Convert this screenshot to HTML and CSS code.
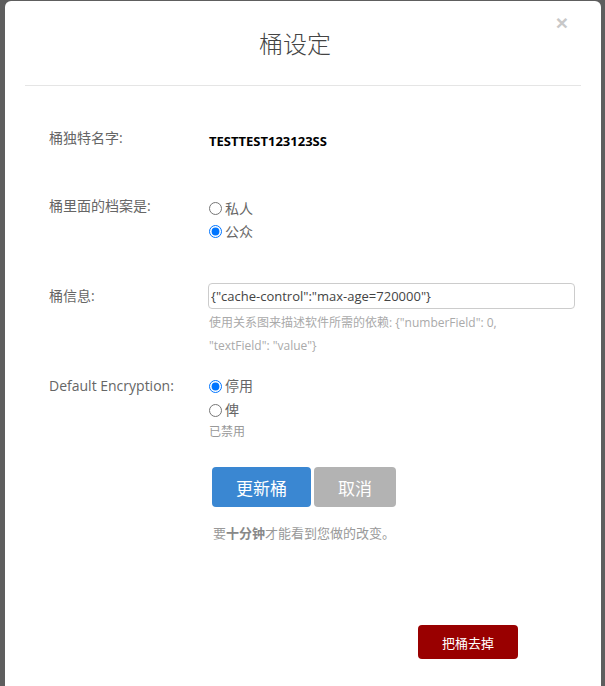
FILE: index.html
```html
<!DOCTYPE html>
<html lang="zh">
<head>
<meta charset="utf-8">
<title>桶设定</title>
<link rel="stylesheet" href="styles.css">
</head>
<body>
<div class="modal">
  <div class="header">
    <h1 class="title">桶设定</h1>
    <span class="close">×</span>
  </div>
  <div class="content">
    <div class="row row-name">
      <div class="label">桶独特名字:</div>
      <div class="value-name">TESTTEST123123SS</div>
    </div>
    <div class="row row-access">
      <div class="label">桶里面的档案是:</div>
      <div class="options">
        <label class="opt"><input type="radio" name="acc"><span>私人</span></label>
        <label class="opt"><input type="radio" name="acc" checked><span>公众</span></label>
      </div>
    </div>
    <div class="row row-info">
      <div class="label label-info">桶信息:</div>
      <div>
        <input class="text-input" type="text" value='{"cache-control":"max-age=720000"}'>
        <div class="help">使用关系图来描述软件所需的依赖: {"numberField": 0, "textField": "value"}</div>
      </div>
    </div>
    <div class="row row-enc">
      <div class="label">Default Encryption:</div>
      <div class="options options-enc">
        <label class="opt opt-enc"><input type="radio" name="enc" checked><span>停用</span></label>
        <label class="opt opt-enc"><input type="radio" name="enc"><span>俾</span></label>
        <div class="disabled-note">已禁用</div>
      </div>
    </div>
    <div class="actions">
      <button class="btn btn-primary">更新桶</button>
      <button class="btn btn-cancel">取消</button>
    </div>
    <p class="note">要<b>十分钟</b>才能看到您做的改变。</p>
    <div class="footer">
      <button class="btn-danger">把桶去掉</button>
    </div>
  </div>
</div>
</body>
</html>
```
FILE: styles.css
```css
html, body {
  margin: 0;
  padding: 0;
}
body {
  background: #5e5e5e;
  height: 686px;
  overflow: hidden;
  font-family: "Open Sans", "Noto Sans CJK SC", sans-serif;
  color: #666;
}
.modal {
  position: relative;
  margin: 1px 4px 0 5px;
  height: 720px;
  background: #fff;
  border-radius: 6px 6px 0 0;
}
.header {
  margin: 0 20px;
  height: 84px;
  border-bottom: 1px solid #e5e5e5;
  display: flex;
  align-items: center;
  justify-content: center;
}
.title {
  margin: 0 16px 0 0;
  font-family: "Noto Sans CJK SC", sans-serif;
  font-size: 24px;
  font-weight: 300;
  color: #444;
  line-height: 30px;
}
.close {
  position: absolute;
  top: 10px;
  right: 33px;
  font-family: "Liberation Sans", sans-serif;
  font-size: 21px;
  font-weight: bold;
  line-height: 24px;
  color: #c8c8c8;
}
.content {
  padding-left: 44px;
}
.row {
  display: grid;
  grid-template-columns: 160px 1fr;
  font-size: 14px;
  line-height: 18px;
}
.row-name { margin-top: 43px; }
.row-access { margin-top: 47px; }
.row-info { margin-top: 40px; }
.row-enc { margin-top: 20px; }
.value-name {
  padding-top: 3px;
  font-size: 13px;
  font-weight: bold;
  color: #000;
}
.options {
  display: flex;
  flex-direction: column;
}
.opt {
  display: flex;
  align-items: center;
  height: 23px;
  color: #666;
  font-size: 14px;
}
.opt input {
  margin: 0 3px 0 0;
  width: 13px;
  height: 13px;
}
.opt-enc { height: 24px; }
.options-enc { margin-top: -3px; }
.label-info { padding-top: 4px; }
.text-input {
  display: block;
  box-sizing: border-box;
  width: 367px;
  height: 26px;
  margin: 0 0 0 -1px;
  padding: 0 3px 0 2px;
  border: 1px solid #ccc;
  border-radius: 4px;
  font-family: "Open Sans", sans-serif;
  font-size: 13px;
  color: #444;
}
.help {
  margin-top: 2px;
  width: 330px;
  font-size: 12px;
  line-height: 23px;
  color: #aaa;
}
.disabled-note {
  font-size: 12px;
  line-height: 20px;
  color: #999;
}
.actions {
  margin: 25px 0 0 163px;
  display: flex;
  gap: 3px;
}
.btn {
  height: 40px;
  padding: 0 24px;
  border: none;
  border-radius: 4px;
  color: #fff;
  font-family: "Noto Sans CJK SC", sans-serif;
  font-size: 17px;
}
.btn-primary { background: #3a87d2; }
.btn-cancel { background: #b3b3b3; }
.note {
  margin: 17px 0 0 164px;
  font-size: 13px;
  line-height: 18px;
  color: #999;
}
.note b { color: #888; }
.footer {
  margin-top: 83px;
  display: flex;
  justify-content: flex-end;
  padding-right: 83px;
}
.btn-danger {
  height: 34px;
  padding: 0 24px;
  border: none;
  border-radius: 4px;
  background: #990000;
  color: #fff;
  font-family: "Noto Sans CJK SC", sans-serif;
  font-size: 13px;
}
```
